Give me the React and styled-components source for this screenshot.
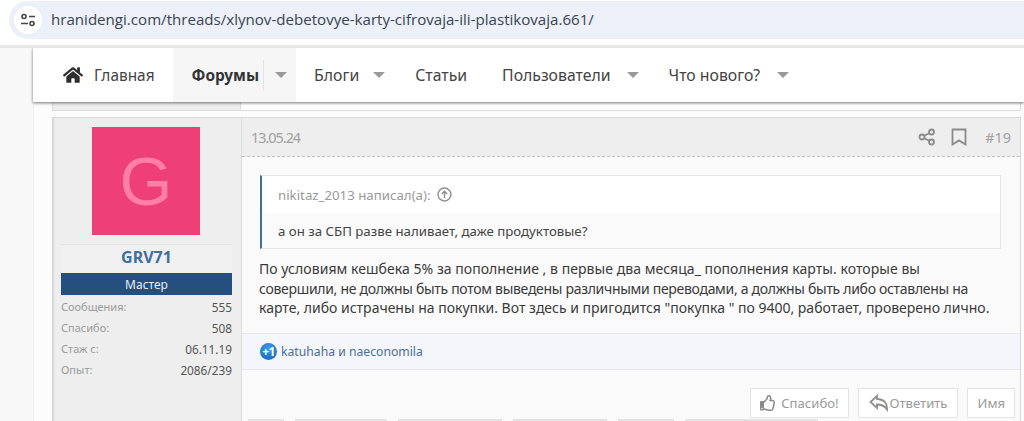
import React from 'react'
import styled, { createGlobalStyle } from 'styled-components'
import { FaHome, FaRegThumbsUp } from 'react-icons/fa'

const GlobalStyle = createGlobalStyle`
  html, body { margin: 0; padding: 0; height: 421px; overflow: hidden; background: #fff; }
  body { font-family: "Noto Sans", "Open Sans", sans-serif; color: #333; }
`

const Browser = styled.div`
  height: 45px;
  padding: 1px 0 0 9px;
  box-sizing: border-box;
  background: #fff;
`
const AddressBar = styled.div`
  height: 38px;
  background: #ebf0f9;
  border-radius: 19px 0 0 19px;
  display: flex;
  align-items: center;
  padding-left: 5px;
`
const SiteIcon = styled.div`
  width: 28px;
  height: 28px;
  border-radius: 50%;
  background: #fff;
  display: flex;
  align-items: center;
  justify-content: center;
  margin-right: 9px;
`
const Url = styled.div`
  font-family: "Open Sans", sans-serif;
  font-size: 15.1px;
  color: #3b4450;
  margin-top: -2px;
`
const Page = styled.div`
  height: 376px;
  background: #f8f8f8;
  border-top: 3px solid #e6e6e6;
  box-sizing: border-box;
  position: relative;
  overflow: hidden;
  padding-left: 33px;
`
const Wrapper = styled.div`
  height: 100%;
  background: #fcfcfc;
  border-left: 1px solid #efefef;
  padding-left: 18px;
`
const Nav = styled.nav`
  position: absolute;
  top: 0;
  left: 33px;
  right: 0;
  height: 54px;
  background: #fff;
  box-shadow: 0 1px 3px rgba(0, 0, 0, 0.55);
  display: flex;
  align-items: stretch;
  padding-left: 30px;
  z-index: 2;
`
const NavItem = styled.div`
  display: flex;
  align-items: center;
  font-size: ${p => p.$size || '15.8px'};
  font-weight: ${p => (p.$active ? 700 : 400)};
  background: ${p => (p.$active ? '#f6f6f6' : 'transparent')};
  padding: ${p => p.$padding || '0'};
  color: ${p => (p.$active ? '#333' : '#444')};
`
const HomeIcon = styled(FaHome)`
  font-size: 20px;
  color: #2e2e2e;
  margin-right: 11px;
`
const Caret = styled.span`
  width: 0;
  height: 0;
  border-left: 6px solid transparent;
  border-right: 6px solid transparent;
  border-top: 6px solid #999;
  margin-left: ${p => p.$gap || '15px'};
`
const NavSplit = styled.span`
  width: 1px;
  height: 30px;
  background: #e4e4e4;
  margin-left: 4px;
`
const PrevPost = styled.div`
  height: 63px;
  margin-right: 3px;
  box-sizing: border-box;
  border: 1px solid #dcdcdc;
  border-top: 0;
  display: grid;
  grid-template-columns: 188px 1fr;
  background: #fff;
`
const PrevSide = styled.div`
  background: #eee;
  border-right: 1px solid #dcdcdc;
`
const Post = styled.article`
  margin: 6px 3px 0 0;
  height: 304px;
  box-sizing: border-box;
  border: 1px solid #d8d8d8;
  border-bottom: 0;
  border-left-width: 2px;
  display: grid;
  grid-template-columns: 188px 1fr;
  background: #fafafa;
`
const Sidebar = styled.aside`
  background: #eee;
  border-right: 1px solid #dcdcdc;
  padding: 9px 9px 0 7px;
  display: flex;
  flex-direction: column;
`
const Avatar = styled.div`
  width: 108px;
  height: 108px;
  margin-left: 31px;
  background: #ef3f78;
  color: #ff7fa8;
  font-family: "Liberation Sans", sans-serif;
  font-size: 68px;
  display: flex;
  align-items: center;
  justify-content: center;
`
const UserName = styled.div`
  margin-top: 9px;
  height: 29px;
  box-sizing: border-box;
  padding-bottom: 5px;
  border-top: 1px solid #e3e3e3;
  background: #f0f0f0;
  color: #3f6f9f;
  font-size: 16px;
  font-weight: 700;
  display: flex;
  align-items: center;
  justify-content: center;
`
const Rank = styled.div`
  height: 22px;
  margin-bottom: 1px;
  background: #244f7e;
  color: #e8eef5;
  font-size: 12px;
  display: flex;
  align-items: center;
  justify-content: center;
`
const Stat = styled.div`
  height: 21px;
  display: flex;
  align-items: center;
  justify-content: space-between;
  font-size: 11px;
  color: #9a9a9a;
`
const StatValue = styled.span`
  color: #555;
  font-size: 11.8px;
`
const Main = styled.div`
  display: flex;
  flex-direction: column;
  min-width: 0;
`
const PostHead = styled.header`
  height: 38px;
  background: #eee;
  border-bottom: 1px dashed #c4c4c4;
  display: flex;
  align-items: center;
  padding: 0 9px;
  color: #a0a0a0;
  font-size: 14.4px;
`
const HeadDate = styled.span`
  flex: 1;
  letter-spacing: -1px;
`
const HeadIcon = styled.svg`
  width: 18px;
  height: 18px;
  margin-right: ${p => p.$gap || '0'};
  fill: none;
  stroke: #8a8a8a;
  stroke-width: 1.8;
`
const Body = styled.div`
  padding: 18px 19px 0 18px;
  flex: 1;
`
const Quote = styled.blockquote`
  margin: 0;
  background: #fff;
  border: 1px solid #e6e6e6;
  border-left: 2px solid #3f6f9f;
  font-size: 13.25px;
  height: 74px;
  box-sizing: border-box;
  display: flex;
  flex-direction: column;
`
const QuoteHead = styled.div`
  height: 37px;
  display: flex;
  align-items: center;
  padding-left: 16px;
  color: #9a9a9a;
  background: #fff;
`
const QuoteBody = styled.div`
  flex: 1;
  display: flex;
  align-items: center;
  padding-left: 16px;
  color: #444;
  background: #fafafa;
`
const QuoteArrow = styled.svg`
  width: 15px;
  height: 15px;
  margin-left: 6px;
  fill: none;
  stroke: #8f8f8f;
  stroke-width: 1.4;
`
const Text = styled.div`
  margin: 10px -10px 0 -1px;
  font-size: 14px;
  line-height: 19.5px;
  color: #3a3a3a;
`
const TextLine = styled.div`
  white-space: nowrap;
  letter-spacing: ${p => p.$spacing || '0'};
`
const Likes = styled.div`
  height: 37px;
  background: #f4f6fb;
  border-top: 1px solid #e8e8e8;
  border-bottom: 1px solid #e8e8e8;
  display: flex;
  align-items: center;
  padding-left: 18px;
  font-size: 12.2px;
  color: #4a6f96;
  box-sizing: border-box;
`
const PlusBadge = styled.span`
  width: 17px;
  height: 17px;
  border-radius: 50%;
  background: radial-gradient(circle at 50% 30%, #3a9be8, #0f66b8);
  color: #fff;
  font-size: 12px;
  font-weight: 700;
  letter-spacing: -0.5px;
  display: flex;
  align-items: center;
  justify-content: center;
  margin-right: 4px;
`
const Actions = styled.div`
  height: 51px;
  display: flex;
  justify-content: flex-end;
  align-items: flex-start;
  padding: 18px 5px 0 0;
  gap: 9px;
  position: relative;
  box-sizing: border-box;
`
const ActionButton = styled.div`
  height: 30px;
  box-sizing: border-box;
  border: 1px solid #e4e4e4;
  background: #fff;
  color: #9a9a9a;
  font-size: 13.1px;
  display: flex;
  align-items: center;
  padding: 0 ${p => p.$pad || '10px'};
  gap: ${p => p.$gap || '5px'};
`
const ThumbIcon = styled(FaRegThumbsUp)`
  font-size: 16px;
  color: #8a8a8a;
`
const ReplyIcon = styled.svg`
  width: 20px;
  height: 18px;
  fill: none;
  stroke: #8f8f8f;
  stroke-width: 1.8;
`
const Tabs = styled.div`
  position: absolute;
  left: 6px;
  bottom: 0;
  height: 2px;
  display: flex;
  gap: 11px;
`
const Tab = styled.span`
  height: 2px;
  width: ${p => p.$w}px;
  background: #e3e3e3;
`

const stats = [
  ['Сообщения:', '555'],
  ['Спасибо:', '508'],
  ['Стаж с:', '06.11.19'],
  ['Опыт:', '2086/239'],
]

const tabWidths = [36, 92, 104, 94, 56, 133]

const App = () => {
  return (
    <>
      <GlobalStyle />
      <Browser>
        <AddressBar>
          <SiteIcon>
            <svg width="16" height="14" viewBox="0 0 16 14" fill="none" stroke="#444" strokeWidth="1.6">
              <circle cx="4" cy="3.5" r="2" />
              <path d="M9 3.5h6M1 10.5h7" />
              <circle cx="12" cy="10.5" r="2" />
            </svg>
          </SiteIcon>
          <Url>hranidengi.com/threads/xlynov-debetovye-karty-cifrovaja-ili-plastikovaja.661/</Url>
        </AddressBar>
      </Browser>
      <Page>
        <Nav>
          <NavItem $size="15.4px" $padding="0 18px 0 0"><HomeIcon />Главная</NavItem>
          <NavItem $active $size="15.4px" $padding="0 9px 0 19px">
            Форумы<NavSplit /><Caret $gap="11px" />
          </NavItem>
          <NavItem $padding="0 0 0 18px">Блоги<Caret $gap="14px" /></NavItem>
          <NavItem $padding="0 0 0 30px">Статьи</NavItem>
          <NavItem $padding="0 0 0 35px">Пользователи<Caret $gap="16px" /></NavItem>
          <NavItem $padding="0 0 0 30px">Что нового?<Caret $gap="17px" /></NavItem>
        </Nav>
        <Wrapper>
          <PrevPost><PrevSide /></PrevPost>
          <Post>
            <Sidebar>
              <Avatar>G</Avatar>
              <UserName>GRV71</UserName>
              <Rank>Мастер</Rank>
              {stats.map(([label, value]) => (
                <Stat key={label}>
                  {label}
                  <StatValue>{value}</StatValue>
                </Stat>
              ))}
            </Sidebar>
            <Main>
              <PostHead>
                <HeadDate>13.05.24</HeadDate>
                <HeadIcon $gap="14px" viewBox="0 0 18 18">
                  <circle cx="4" cy="9" r="2.5" />
                  <circle cx="13.5" cy="4" r="2.5" />
                  <circle cx="13.5" cy="14" r="2.5" />
                  <path d="M6.2 7.8l5-2.6M6.2 10.2l5 2.6" />
                </HeadIcon>
                <HeadIcon $gap="17px" viewBox="0 0 18 18">
                  <path d="M2.5 1.5h13v15L9 12.4 2.5 16.5z" />
                </HeadIcon>
                #19
              </PostHead>
              <Body>
                <Quote>
                  <QuoteHead>
                    nikitaz_2013 написал(а):
                    <QuoteArrow viewBox="0 0 15 15">
                      <circle cx="7.5" cy="7.5" r="6.5" />
                      <path d="M7.5 11V4.5M4.8 7l2.7-2.7L10.2 7" />
                    </QuoteArrow>
                  </QuoteHead>
                  <QuoteBody>а он за СБП разве наливает, даже продуктовые?</QuoteBody>
                </Quote>
                <Text>
                  <TextLine $spacing="0.05px">По условиям кешбека 5% за пополнение , в первые два месяца_ пополнения карты. которые вы</TextLine>
                  <TextLine $spacing="-0.3px">совершили, не должны быть потом выведены различными переводами, а должны быть либо оставлены на</TextLine>
                  <TextLine>карте, либо истрачены на покупки. Вот здесь и пригодится "покупка " по 9400, работает, проверено лично.</TextLine>
                </Text>
              </Body>
              <Likes>
                <PlusBadge>+1</PlusBadge>
                katuhaha и naeconomila
              </Likes>
              <Actions>
                <ActionButton $pad="9px">
                  <ThumbIcon />
                  Спасибо!
                </ActionButton>
                <ActionButton $gap="1px">
                  <ReplyIcon viewBox="0 0 20 18">
                    <path d="M8 2L1.5 8 8 14v-3.5c4.500 0 7.500 1 10 5 .5-6-2.500-10-10-10.500z" />
                  </ReplyIcon>
                  Ответить
                </ActionButton>
                <ActionButton $pad="9px">Имя</ActionButton>
                <Tabs>
                  {tabWidths.map((w, i) => <Tab key={i} $w={w} />)}
                </Tabs>
              </Actions>
            </Main>
          </Post>
        </Wrapper>
      </Page>
    </>
  )
}

export default App
